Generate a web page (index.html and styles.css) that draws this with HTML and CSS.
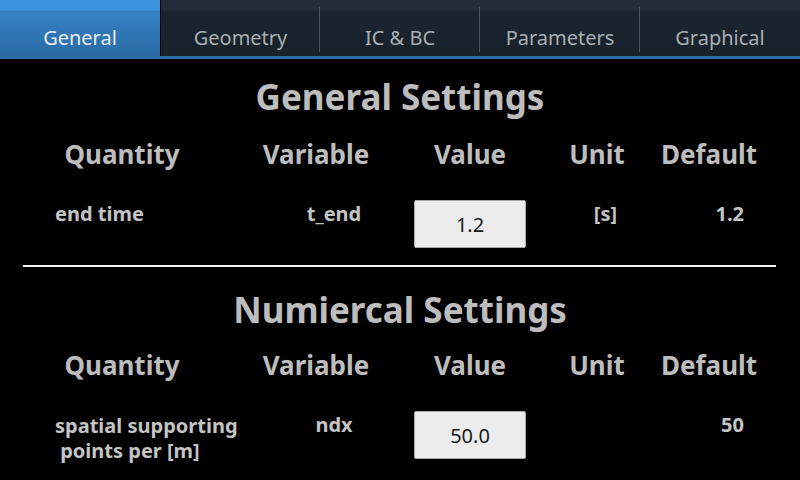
FILE: index.html
```html
<!DOCTYPE html>
<html>
<head>
<meta charset="utf-8">
<link rel="stylesheet" href="styles.css">
</head>
<body>
<nav class="tabs">
  <div class="tab active">General</div>
  <div class="tab sep">Geometry</div>
  <div class="tab sep">IC &amp; BC</div>
  <div class="tab sep">Parameters</div>
  <div class="tab">Graphical</div>
</nav>
<main class="content">
  <section class="block">
    <h2 class="title">General Settings</h2>
    <div class="grid">
      <div class="hd">Quantity</div>
      <div class="hd">Variable</div>
      <div class="hd">Value</div>
      <div class="hd">Unit</div>
      <div class="hd">Default</div>

      <div class="cell qty">end time</div>
      <div class="cell var">t_end</div>
      <div class="cell val"><div class="input">1.2</div></div>
      <div class="cell unit">[s]</div>
      <div class="cell def">1.2</div>
    </div>
  </section>
  <hr class="divider">
  <section class="block second">
    <h2 class="title">Numiercal Settings</h2>
    <div class="grid">
      <div class="hd">Quantity</div>
      <div class="hd">Variable</div>
      <div class="hd">Value</div>
      <div class="hd">Unit</div>
      <div class="hd">Default</div>

      <div class="cell qty"><span class="line">spatial supporting</span><span class="line">&nbsp;points per [m]</span></div>
      <div class="cell var">ndx</div>
      <div class="cell val"><div class="input">50.0</div></div>
      <div class="cell unit"></div>
      <div class="cell def">50</div>

      <div class="cell qty"></div>
      <div class="cell var"></div>
      <div class="cell val"><div class="input dark"></div></div>
      <div class="cell unit"></div>
      <div class="cell def"></div>
    </div>
  </section>
</main>
</body>
</html>
```

FILE: styles.css
```css
html, body {
  margin: 0;
  padding: 0;
  width: 800px;
  height: 480px;
  overflow: hidden;
  background: #000;
  font-family: "Noto Sans", "Open Sans", "DejaVu Sans", sans-serif;
}

.tabs {
  display: flex;
  height: 56px;
  border-bottom: 3px solid #2e6ea7;
}

.tab {
  position: relative;
  width: 160px;
  flex: none;
  box-sizing: border-box;
  display: flex;
  align-items: flex-end;
  justify-content: center;
  padding-bottom: 5px;
  font-size: 20px;
  color: #a9aeb3;
  background: linear-gradient(#232c38 0, #232c38 10px, #1b2430 11px, #19212b 100%);
}

.tab.active {
  color: #e8eef4;
  background: linear-gradient(#3d93dd 0, #3d93dd 10px, #3582c6 11px, #2b6aa5 100%);
}

.tab:nth-child(2) { margin-left: 1px; width: 159px; }

.tab.sep::after {
  content: "";
  position: absolute;
  right: 0;
  top: 7px;
  bottom: 4px;
  width: 1px;
  background: #46515c;
}

.content {
  padding: 0 24px;
}

.title {
  margin: 18px 0 0;
  text-align: center;
  font-size: 35px;
  line-height: 40px;
  font-weight: bold;
  color: #bdbdbd;
}

.second .title {
  margin-top: 23px;
}

.grid {
  display: grid;
  grid-template-columns: 196px 192px 116px 138px 86px;
  align-items: start;
}

.hd {
  justify-self: center;
  white-space: nowrap;
  font-size: 26px;
  line-height: 32px;
  font-weight: bold;
  color: #bdbdbd;
  padding-top: 21px;
  padding-bottom: 30px;
}

.second .hd {
  padding-top: 19px;
}

.cell {
  white-space: nowrap;
  font-size: 20px;
  line-height: 24px;
  font-weight: bold;
  color: #c4c4c4;
  padding-top: 2px;
}

.line {
  display: block;
  line-height: 25px;
}

.qty { padding-left: 31px; }
.var { text-align: center; padding-left: 36px; }
.unit { text-align: center; padding-left: 17px; }
.def { text-align: right; padding-right: 8px; }

.val {
  padding-top: 0;
  display: flex;
  justify-content: center;
}

.input {
  width: 112px;
  height: 48px;
  box-sizing: border-box;
  border: 1px solid #a8a8a8;
  border-radius: 2px;
  background: #ececec;
  color: #1a1a1a;
  font-weight: normal;
  font-size: 20px;
  display: flex;
  align-items: center;
  justify-content: center;
  padding-top: 2px;
}

.input.dark {
  margin-top: 18px;
  height: 3px;
  background: #1c1c1c;
  border-color: #2a2a2a;
}

.divider {
  margin: 17px 0 0 -1px;
  border: 0;
  height: 2px;
  background: #f2f2f2;
  width: 753px;
}
```
